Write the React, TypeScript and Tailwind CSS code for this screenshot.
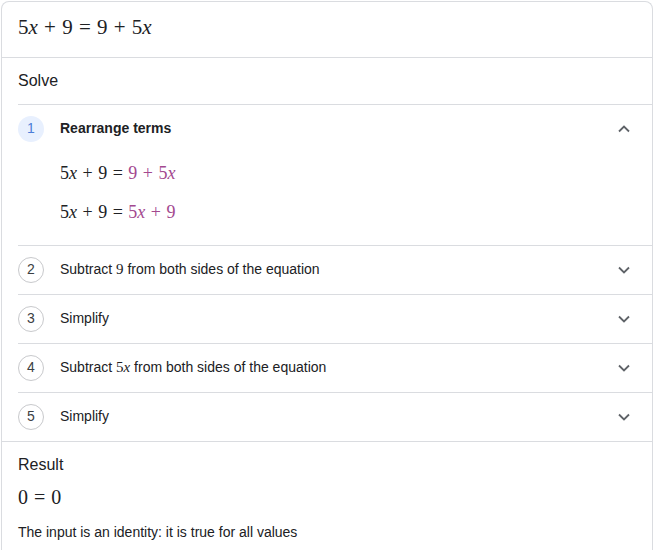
import React from "react";

const serif = { fontFamily: '"Liberation Serif", "Times New Roman", serif' };

function Chevron({ up }: { up?: boolean }) {
  return (
    <svg width="12" height="8" viewBox="0 0 12 8" className="shrink-0">
      <path
        d={up ? "M1 6.5 L6 1.5 L11 6.5" : "M1 1.5 L6 6.5 L11 1.5"}
        fill="none"
        stroke="#5f6368"
        strokeWidth="1.8"
      />
    </svg>
  );
}

const X = () => <i>x</i>;
const Op = ({ c }: { c: string }) => <span className="px-[1px]">{c}</span>;

function Circle({ n, active }: { n: number; active?: boolean }) {
  return (
    <div
      className={
        active
          ? "w-[26px] h-[26px] rounded-full bg-[#e8f0fe] text-[#4c7ed8] flex items-center justify-center text-[14px] shrink-0"
          : "w-[26px] h-[26px] rounded-full border border-[#c8c9cc] text-[#3c4043] flex items-center justify-center text-[14px] shrink-0"
      }
    >
      {n}
    </div>
  );
}

function Row({ n, children, last }: { n: number; children: React.ReactNode; last?: boolean }) {
  return (
    <div
      className={
        last
          ? "ml-[16px] h-[48px] flex items-center pr-[22px] pb-[1px]"
          : "ml-[16px] border-b border-[#dadce0] h-[49px] flex items-center pr-[22px] pb-[1px]"
      }
    >
      <Circle n={n} />
      <div className="ml-[16px] flex-1 text-[14px] text-[#202124]">{children}</div>
      <Chevron />
    </div>
  );
}

export default function App() {
  return (
    <div
      className="w-[652px] ml-[1px] mt-[1px] border border-b-0 border-[#dadce0] rounded-t-[8px] bg-white h-[549px]"
      style={{ fontFamily: '"Liberation Sans", Arial, sans-serif' }}
    >
      <div className="h-[56px] border-b border-[#dadce0] flex items-center pl-[16px] pb-[3px] text-[21px] text-[#202124]" style={serif}>
        <span>
          5<X /> <Op c="+" /> 9 <Op c="=" /> 9 <Op c="+" /> 5<X />
        </span>
      </div>
      <div className="ml-[16px] h-[47px] border-b border-[#dadce0] flex items-center text-[16px] text-[#202124]">
        Solve
      </div>
      <div className="ml-[16px] border-b border-[#dadce0] pr-[22px]">
        <div className="h-[47px] flex items-center">
          <Circle n={1} active />
          <div className="ml-[16px] flex-1 text-[14px] font-bold text-[#202124]">Rearrange terms</div>
          <Chevron up />
        </div>
        <div className="pl-[42px] pt-[9px] pb-[21px] text-[18px] text-[#202124]" style={serif}>
          <div className="h-[24px] leading-[24px]">
            5<X /> <Op c="+" /> 9 <Op c="=" />{" "}
            <span className="text-[#a3498f]">
              9 <Op c="+" /> 5<X />
            </span>
          </div>
          <div className="h-[24px] leading-[24px] mt-[15px]">
            5<X /> <Op c="+" /> 9 <Op c="=" />{" "}
            <span className="text-[#a3498f]">
              5<X /> <Op c="+" /> 9
            </span>
          </div>
        </div>
      </div>
      <Row n={2}>
        Subtract <span style={serif} className="text-[15px]">9</span> from both sides of the equation
      </Row>
      <Row n={3}>Simplify</Row>
      <Row n={4}>
        Subtract <span style={serif} className="text-[15px]">5<X /></span> from both sides of the equation
      </Row>
      <Row n={5} last>
        Simplify
      </Row>
      <div className="border-t border-[#dadce0] pl-[16px]">
        <div className="h-[43px] flex items-center pt-[3px] text-[16px] text-[#202124]">Result</div>
        <div className="text-[20px] leading-[24px] text-[#202124]" style={serif}>
          0 <Op c="=" /> 0
        </div>
        <div className="mt-[13px] text-[14px] text-[#202124]">The input is an identity: it is true for all values</div>
      </div>
    </div>
  );
}
